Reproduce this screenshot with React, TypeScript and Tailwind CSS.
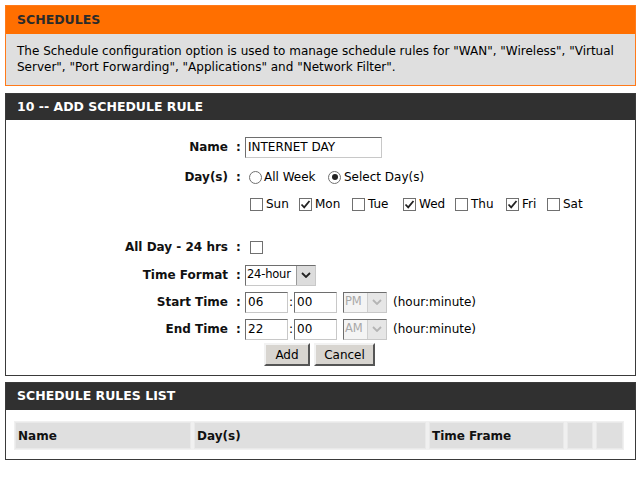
import React from 'react';

const font = { fontFamily: '"DejaVu Sans", Verdana, sans-serif' };

const Check = ({ checked }: { checked?: boolean }) => (
  <span className="relative inline-block w-[13px] h-[13px] shrink-0 border border-[#707070] bg-white">
    {checked && (
      <svg viewBox="0 0 13 13" className="absolute left-[-1px] top-[-1px] w-[13px] h-[13px]">
        <path d="M2.5 6.5 L5.2 9.3 L10.5 3" fill="none" stroke="#222" strokeWidth="1.8" />
      </svg>
    )}
  </span>
);

const Radio = ({ checked }: { checked?: boolean }) => (
  <span className="inline-flex items-center justify-center w-[13px] h-[13px] shrink-0 rounded-full border border-[#707070] bg-white">
    {checked && <span className="w-[6px] h-[6px] rounded-full bg-[#222]" />}
  </span>
);

const Chevron = ({ color }: { color: string }) => (
  <svg viewBox="0 0 10 6" className="w-[10px] h-[6px]">
    <path d="M1 1 L5 5 L9 1" fill="none" stroke={color} strokeWidth="1.8" />
  </svg>
);

const FakeSelect = ({ value, width, disabled }: { value: string; width: string; disabled?: boolean }) => (
  <div
    className={`${width} h-[21px] flex items-stretch border border-t-[#6e6e6e] border-l-[#6e6e6e] border-b-[#c8c8c8] border-r-[#c8c8c8] text-[11.5px] ${
      disabled ? 'bg-[#f4f4f4] text-[#a8a8a8]' : 'bg-white text-black'
    }`}
  >
    <span className="flex-1 pl-[1px] flex items-center leading-none overflow-hidden whitespace-nowrap tracking-[-0.2px]">{value}</span>
    <span
      className={`w-[19px] shrink-0 flex items-center justify-center border-l ${
        disabled ? 'bg-[#e6e6e6] border-[#cfcfcf]' : 'bg-[#dcdcdc] border-[#9a9a9a]'
      }`}
    >
      <Chevron color={disabled ? '#b4b4b4' : '#222'} />
    </span>
  </div>
);

const TextBox = ({ value, width }: { value: string; width: string }) => (
  <div className={`${width} h-[21px] bg-white flex items-center pl-[2px] border border-t-[#6e6e6e] border-l-[#6e6e6e] border-b-[#c8c8c8] border-r-[#c8c8c8]`}>
    {value}
  </div>
);

const Label = ({ text }: { text: string }) => (
  <div className="w-[234px] shrink-0 flex justify-end items-center font-bold text-[12px] text-[#111]">
    <span>{text}</span>
    <span className="ml-[8px] w-[4px]">:</span>
  </div>
);

const Row = ({ label, h, children }: { label?: string; h: string; children?: React.ReactNode }) => (
  <div className={`flex items-center ${h}`}>
    {label ? <Label text={label} /> : <div className="w-[234px] shrink-0" />}
    <div className="ml-[5px] flex items-center">{children}</div>
  </div>
);

const Button = ({ text, width }: { text: string; width: string }) => (
  <div className={`${width} h-[23px] flex items-center justify-center bg-[#d8d5d0] border-2 border-t-[#f2f2f2] border-l-[#f2f2f2] border-b-[#555] border-r-[#555] text-[12px]`}>
    {text}
  </div>
);

const days = [
  { name: 'Sun', on: false, w: 'w-[49px]' },
  { name: 'Mon', on: true, w: 'w-[53px]' },
  { name: 'Tue', on: false, w: 'w-[51px]' },
  { name: 'Wed', on: true, w: 'w-[52px]' },
  { name: 'Thu', on: false, w: 'w-[51px]' },
  { name: 'Fri', on: true, w: 'w-[41px]' },
  { name: 'Sat', on: false, w: 'w-[40px]' },
];

export default function App() {
  return (
    <div className="w-[640px] h-[485px] bg-white pt-[5px] px-[5px] text-[12px] text-black" style={font}>
      {/* Schedules intro */}
      <div className="w-[631px] border border-[#ff7a1a]">
        <div className="h-[28px] bg-[#ff6f00] flex items-center pl-[11px] font-bold text-[12.5px] text-[#2b2b2b]">
          SCHEDULES
        </div>
        <div className="h-[51px] bg-[#dfdfdf] px-[11px] pt-[9px] leading-[16px] text-[12px]">
          The Schedule configuration option is used to manage schedule rules for "WAN", "Wireless", "Virtual
          Server", "Port Forwarding", "Applications" and "Network Filter".
        </div>
      </div>

      {/* Add schedule rule */}
      <div className="mt-[7px] w-[631px] border border-[#3a3a3a] bg-white">
        <div className="h-[26px] bg-[#303030] flex items-center pl-[11px] font-bold text-[12.5px] text-white">
          10 -- ADD SCHEDULE RULE
        </div>
        <div className="pt-[13px] pb-[9px]">
          <Row label="Name" h="h-[28px]">
            <TextBox value="INTERNET DAY" width="w-[137px]" />
          </Row>
          <Row label="Day(s)" h="h-[32px]">
            <div className="flex items-center pl-[4px]">
              <Radio />
              <span className="ml-[2px] w-[64px]">All Week</span>
              <Radio checked />
              <span className="ml-[3px]">Select Day(s)</span>
            </div>
          </Row>
          <Row h="h-[22px]">
            <div className="flex items-center pl-[5px]">
              {days.map((d) => (
                <div key={d.name} className={`flex items-center ${d.w}`}>
                  <Check checked={d.on} />
                  <span className="ml-[3px]">{d.name}</span>
                </div>
              ))}
            </div>
          </Row>
          <div className="h-[18px]" />
          <Row label="All Day - 24 hrs" h="h-[28px]">
            <span className="pl-[5px] flex">
              <Check />
            </span>
          </Row>
          <Row label="Time Format" h="h-[28px]">
            <FakeSelect value="24-hour" width="w-[71px]" />
          </Row>
          <Row label="Start Time" h="h-[26px]">
            <TextBox value="06" width="w-[43px]" />
            <span className="w-[6px] text-center">:</span>
            <TextBox value="00" width="w-[43px]" />
            <span className="ml-[6px]">
              <FakeSelect value="PM" width="w-[44px]" disabled />
            </span>
            <span className="ml-[6px]">(hour:minute)</span>
          </Row>
          <Row label="End Time" h="h-[28px]">
            <TextBox value="22" width="w-[43px]" />
            <span className="w-[6px] text-center">:</span>
            <TextBox value="00" width="w-[43px]" />
            <span className="ml-[6px]">
              <FakeSelect value="AM" width="w-[44px]" disabled />
            </span>
            <span className="ml-[6px]">(hour:minute)</span>
          </Row>
          <div className="flex h-[23px] pl-[258px] gap-[4px]">
            <Button text="Add" width="w-[46px]" />
            <Button text="Cancel" width="w-[61px]" />
          </div>
        </div>
      </div>

      {/* Schedule rules list */}
      <div className="mt-[6px] w-[631px] border border-[#3a3a3a] bg-white">
        <div className="h-[27px] bg-[#303030] flex items-center pl-[11px] font-bold text-[12.5px] text-white">
          SCHEDULE RULES LIST
        </div>
        <div className="pl-[8px] pt-[11px] pb-[9px]">
          <div className="grid grid-cols-[176px_232px_135px_26px_27px] gap-[3px] p-[1px] w-fit bg-[#f0f0f0]">
            {['Name', 'Day(s)', 'Time Frame', '', ''].map((h, i) => (
              <div
                key={i}
                className="h-[27px] bg-[#dfdfdf] border border-[#e9e9e9] flex items-center pl-[2px] font-bold text-[12px] text-[#111]"
              >
                {h}
              </div>
            ))}
          </div>
        </div>
      </div>
    </div>
  );
}
